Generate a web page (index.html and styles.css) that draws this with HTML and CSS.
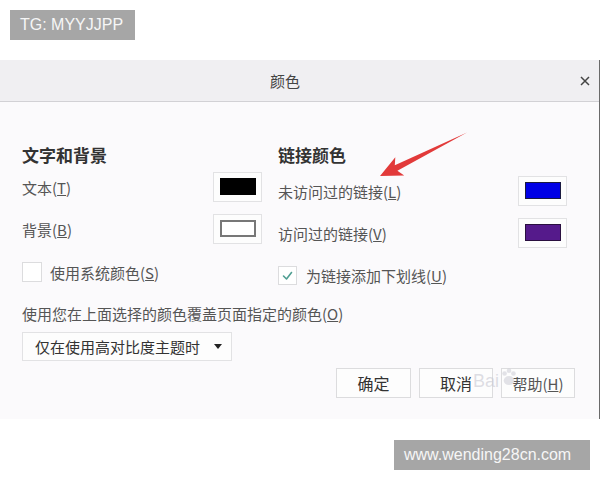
FILE: index.html
```html
<!DOCTYPE html>
<html lang="zh-CN">
<head>
<meta charset="utf-8">
<title>颜色</title>
<link rel="stylesheet" href="styles.css">
</head>
<body>
<div class="page">
  <div class="top"><span class="tag">TG: MYYJJPP</span></div>

  <div class="dialog">
    <div class="titlebar">
      <span class="title">颜色</span>
      <svg class="close" width="10" height="10" viewBox="0 0 10 10"><path d="M1 1L9 9M9 1L1 9" stroke="#444" stroke-width="1.5" fill="none"/></svg>
    </div>

    <div class="content">
      <div class="cols">
        <div class="col col-left">
          <div class="heading">文字和背景</div>
          <div class="row row-a"><span class="label">文本(<u>T</u>)</span><span class="swatch"><span class="fill fill-black"></span></span></div>
          <div class="row row-b"><span class="label">背景(<u>B</u>)</span><span class="swatch"><span class="fill fill-white"></span></span></div>
          <div class="check-row check-left"><span class="checkbox"></span><span class="label">使用系统颜色(<u>S</u>)</span></div>
        </div>
        <div class="col col-right">
          <div class="heading">链接颜色</div>
          <div class="row row-c"><span class="label">未访问过的链接(<u>L</u>)</span><span class="swatch"><span class="fill fill-blue"></span></span></div>
          <div class="row row-b"><span class="label">访问过的链接(<u>V</u>)</span><span class="swatch"><span class="fill fill-purple"></span></span></div>
          <div class="check-row check-right"><span class="checkbox checked"><svg width="17" height="17" viewBox="0 0 17 17"><path d="M4.5 9l3 3 5-6.5" stroke="#4f9e92" stroke-width="1.6" fill="none" stroke-linecap="round" stroke-linejoin="round"/></svg></span><span class="label">为链接添加下划线(<u>U</u>)</span></div>
        </div>
      </div>

      <div class="note">使用您在上面选择的颜色覆盖页面指定的颜色(<u>O</u>)</div>

      <div class="select">
        <span>仅在使用高对比度主题时</span>
        <svg width="8" height="5" viewBox="0 0 8 5"><path d="M0 0h8L4 5z" fill="#222"/></svg>
      </div>

      <div class="buttons">
        <span class="btn btn-ok">确定</span>
        <span class="btn">取消</span>
        <span class="btn btn-help">帮助(<u>H</u>)</span>
        <span class="watermark">Bai<svg class="paw" width="16" height="18" viewBox="0 0 18 20"><circle cx="4" cy="6" r="2.6"/><circle cx="9" cy="3" r="2.6"/><circle cx="14" cy="6" r="2.6"/><ellipse cx="9" cy="14" rx="6" ry="5"/></svg></span>
      </div>
    </div>
  </div>

  <div class="bottom"><span class="tag tag-site">www.wending28cn.com</span></div>
</div>

<svg class="arrow" width="600" height="480" viewBox="0 0 600 480">
  <polygon points="467,132.5 397.4,170.7 404.2,175.6 380,176 395.3,157.2 394.8,165.3" fill="#e23a3a"/>
</svg>
</body>
</html>
```

FILE: styles.css
```css
html, body {
  margin: 0;
  padding: 0;
}

body {
  width: 600px;
  height: 480px;
  overflow: hidden;
  position: relative;
  background: #ffffff;
  font-family: "Noto Sans CJK SC", "Microsoft YaHei", sans-serif;
  color: #555;
}

.page {
  display: flex;
  flex-direction: column;
}

.top {
  height: 50px;
  padding: 10px 0 0 10px;
  box-sizing: border-box;
}

.tag {
  display: inline-block;
  height: 30px;
  line-height: 30px;
  padding-left: 10px;
  box-sizing: border-box;
  width: 125px;
  background: #a6a6a6;
  color: #f6f6f6;
  font-family: "Liberation Sans", Arial, sans-serif;
  font-size: 16px;
}

.dialog {
  margin-top: 10px;
  height: 359px;
  box-sizing: border-box;
  border-right: 1px solid #6a6a6a;
  background: #fbfafc;
  display: flex;
  flex-direction: column;
}

.titlebar {
  height: 42px;
  box-sizing: border-box;
  border-bottom: 1px solid #d2d1d5;
  background: #f0eff2;
  display: flex;
  align-items: center;
}

.title {
  margin-left: 270px;
  font-size: 15px;
  color: #444;
  line-height: 20px;
}

.close {
  margin-left: auto;
  margin-right: 9px;
}

.content {
  padding: 42px 24px 0 22px;
  display: flex;
  flex-direction: column;
}

.cols {
  display: grid;
  grid-template-columns: 240px 289px;
  column-gap: 16px;
}

.heading {
  height: 22px;
  line-height: 22px;
  font-size: 17px;
  font-weight: bold;
  color: #333;
}

.row {
  height: 30px;
  display: flex;
  align-items: center;
  justify-content: space-between;
}

.label {
  font-size: 15px;
  line-height: 20px;
  color: #555;
  padding-top: 2px;
}

.col-left .row-a { margin-top: 6px; }
.col-right .row-c { margin-top: 10px; }
.row-b { margin-top: 12px; }

.swatch {
  width: 49px;
  height: 30px;
  box-sizing: border-box;
  border: 1px solid #e2e2e4;
  background: #fdfdfd;
  padding: 5px 5px 0 6px;
}

.fill {
  display: block;
  width: 36px;
  height: 17px;
  box-sizing: border-box;
}

.fill-black { background: #000; }
.fill-white { background: #fff; border: 2px solid #777; }
.fill-blue { background: #0000e6; border: 1px solid #1a1a40; }
.fill-purple { background: #551a8b; border: 1px solid #2a1040; }

.check-row {
  display: flex;
  align-items: center;
  height: 20px;
}

.check-left { margin-top: 18px; gap: 8px; }
.check-right { margin-top: 17px; gap: 9px; }

.checkbox {
  width: 20px;
  height: 20px;
  box-sizing: border-box;
  border: 1px solid #dcdcde;
  background: #fff;
  display: flex;
  align-items: center;
  justify-content: center;
}

.checkbox.checked {
  width: 19px;
  height: 19px;
}

.note {
  margin-top: 19px;
  font-size: 15px;
  line-height: 20px;
  color: #555;
}

.select {
  margin-top: 8px;
  width: 210px;
  height: 29px;
  box-sizing: border-box;
  border: 1px solid #e2e2e4;
  background: #fdfdfd;
  display: flex;
  align-items: center;
  justify-content: space-between;
  padding: 0 9px 0 12px;
  font-size: 15px;
  color: #333;
}

.buttons {
  margin-top: 7px;
  display: flex;
  justify-content: flex-end;
  gap: 8px;
  position: relative;
}

.btn {
  width: 74px;
  height: 30px;
  box-sizing: border-box;
  border: 1px solid #dcdcde;
  background: #fdfdfd;
  display: flex;
  align-items: center;
  justify-content: center;
  font-size: 16px;
  color: #333;
}

.btn-ok { width: 75px; }
.btn-help { color: #555; font-size: 15px; }

.watermark {
  position: absolute;
  left: 451px;
  top: 3px;
  font-family: "Liberation Sans", Arial, sans-serif;
  font-size: 18px;
  color: rgba(200, 200, 210, 0.6);
  display: flex;
  align-items: flex-start;
  gap: 2px;
}

.paw {
  fill: rgba(200, 200, 210, 0.5);
  margin-top: -3px;
}

.bottom {
  margin-top: 21px;
  display: flex;
  justify-content: flex-end;
  padding-right: 10px;
}

.tag-site {
  width: 196px;
}

.arrow {
  position: absolute;
  left: 0;
  top: 0;
  pointer-events: none;
}
```
